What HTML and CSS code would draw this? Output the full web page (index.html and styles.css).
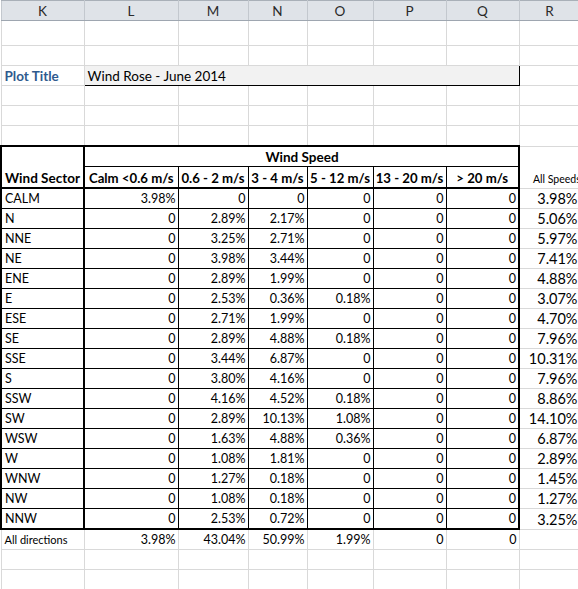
FILE: index.html
```html
<!DOCTYPE html>
<html>
<head>
<meta charset="utf-8">
<link rel="stylesheet" href="styles.css">
</head>
<body>
<table class="sheet">
  <colgroup>
    <col class="c-k"><col class="c-l"><col class="c-m"><col class="c-n"><col class="c-o"><col class="c-p"><col class="c-q"><col class="c-r">
  </colgroup>
  <thead>
    <tr class="colhead">
      <th>K</th><th>L</th><th>M</th><th>N</th><th>O</th><th>P</th><th>Q</th><th>R</th>
    </tr>
  </thead>
  <tbody>
    <tr class="r-first"><td></td><td></td><td></td><td></td><td></td><td></td><td></td><td></td></tr>
    <tr><td></td><td></td><td></td><td></td><td></td><td></td><td></td><td></td></tr>
    <tr>
      <td class="plot-label">Plot Title</td>
      <td class="plot-box" colspan="6">Wind Rose - June 2014</td>
      <td></td>
    </tr>
    <tr><td></td><td></td><td></td><td></td><td></td><td></td><td></td><td></td></tr>
    <tr><td></td><td></td><td></td><td></td><td></td><td></td><td></td><td></td></tr>
    <tr><td></td><td></td><td></td><td></td><td></td><td></td><td></td><td></td></tr>

    <tr class="hrow1">
      <td class="t sector-head" rowspan="2">Wind Sector</td>
      <td class="t speed-head" colspan="6">Wind Speed</td>
      <td class="r-blank"></td>
    </tr>
    <tr class="hrow2">
      <td class="t bin">Calm &lt;0.6 m/s</td>
      <td class="t bin">0.6 - 2 m/s</td>
      <td class="t bin">3 - 4 m/s</td>
      <td class="t bin">5 - 12 m/s</td>
      <td class="t bin">13 - 20 m/s</td>
      <td class="t bin last">&gt; 20 m/s</td>
      <td class="all-speeds">All Speeds</td>
    </tr>

    <tr class="first-data"><td class="t dir">CALM</td><td class="t n">3.98%</td><td class="t n">0</td><td class="t n">0</td><td class="t n">0</td><td class="t n">0</td><td class="t n last">0</td><td class="tot">3.98%</td></tr>
    <tr><td class="t dir">N</td><td class="t n">0</td><td class="t n">2.89%</td><td class="t n">2.17%</td><td class="t n">0</td><td class="t n">0</td><td class="t n last">0</td><td class="tot">5.06%</td></tr>
    <tr><td class="t dir">NNE</td><td class="t n">0</td><td class="t n">3.25%</td><td class="t n">2.71%</td><td class="t n">0</td><td class="t n">0</td><td class="t n last">0</td><td class="tot">5.97%</td></tr>
    <tr><td class="t dir">NE</td><td class="t n">0</td><td class="t n">3.98%</td><td class="t n">3.44%</td><td class="t n">0</td><td class="t n">0</td><td class="t n last">0</td><td class="tot">7.41%</td></tr>
    <tr><td class="t dir">ENE</td><td class="t n">0</td><td class="t n">2.89%</td><td class="t n">1.99%</td><td class="t n">0</td><td class="t n">0</td><td class="t n last">0</td><td class="tot">4.88%</td></tr>
    <tr><td class="t dir">E</td><td class="t n">0</td><td class="t n">2.53%</td><td class="t n">0.36%</td><td class="t n">0.18%</td><td class="t n">0</td><td class="t n last">0</td><td class="tot">3.07%</td></tr>
    <tr><td class="t dir">ESE</td><td class="t n">0</td><td class="t n">2.71%</td><td class="t n">1.99%</td><td class="t n">0</td><td class="t n">0</td><td class="t n last">0</td><td class="tot">4.70%</td></tr>
    <tr><td class="t dir">SE</td><td class="t n">0</td><td class="t n">2.89%</td><td class="t n">4.88%</td><td class="t n">0.18%</td><td class="t n">0</td><td class="t n last">0</td><td class="tot">7.96%</td></tr>
    <tr><td class="t dir">SSE</td><td class="t n">0</td><td class="t n">3.44%</td><td class="t n">6.87%</td><td class="t n">0</td><td class="t n">0</td><td class="t n last">0</td><td class="tot">10.31%</td></tr>
    <tr><td class="t dir">S</td><td class="t n">0</td><td class="t n">3.80%</td><td class="t n">4.16%</td><td class="t n">0</td><td class="t n">0</td><td class="t n last">0</td><td class="tot">7.96%</td></tr>
    <tr><td class="t dir">SSW</td><td class="t n">0</td><td class="t n">4.16%</td><td class="t n">4.52%</td><td class="t n">0.18%</td><td class="t n">0</td><td class="t n last">0</td><td class="tot">8.86%</td></tr>
    <tr><td class="t dir">SW</td><td class="t n">0</td><td class="t n">2.89%</td><td class="t n">10.13%</td><td class="t n">1.08%</td><td class="t n">0</td><td class="t n last">0</td><td class="tot">14.10%</td></tr>
    <tr><td class="t dir">WSW</td><td class="t n">0</td><td class="t n">1.63%</td><td class="t n">4.88%</td><td class="t n">0.36%</td><td class="t n">0</td><td class="t n last">0</td><td class="tot">6.87%</td></tr>
    <tr><td class="t dir">W</td><td class="t n">0</td><td class="t n">1.08%</td><td class="t n">1.81%</td><td class="t n">0</td><td class="t n">0</td><td class="t n last">0</td><td class="tot">2.89%</td></tr>
    <tr><td class="t dir">WNW</td><td class="t n">0</td><td class="t n">1.27%</td><td class="t n">0.18%</td><td class="t n">0</td><td class="t n">0</td><td class="t n last">0</td><td class="tot">1.45%</td></tr>
    <tr><td class="t dir">NW</td><td class="t n">0</td><td class="t n">1.08%</td><td class="t n">0.18%</td><td class="t n">0</td><td class="t n">0</td><td class="t n last">0</td><td class="tot">1.27%</td></tr>
    <tr class="last-data"><td class="t dir">NNW</td><td class="t n">0</td><td class="t n">2.53%</td><td class="t n">0.72%</td><td class="t n">0</td><td class="t n">0</td><td class="t n last">0</td><td class="tot">3.25%</td></tr>

    <tr class="totals">
      <td class="all-dir">All directions</td>
      <td class="n">3.98%</td><td class="n">43.04%</td><td class="n">50.99%</td><td class="n">1.99%</td><td class="n">0</td><td class="n">0</td><td></td>
    </tr>
    <tr><td></td><td></td><td></td><td></td><td></td><td></td><td></td><td></td></tr>
    <tr><td></td><td></td><td></td><td></td><td></td><td></td><td></td><td></td></tr>
  </tbody>
</table>
</body>
</html>
```

FILE: styles.css
```css
html, body {
  margin: 0;
  padding: 0;
  background: #ffffff;
  overflow: hidden;
}

body {
  width: 578px;
  height: 589px;
}

.sheet {
  border-collapse: collapse;
  table-layout: fixed;
  width: 579px;
  font-family: Lato, "Liberation Sans", sans-serif;
  font-size: 12.5px;
  color: #000;
}

.c-k { width: 83px; }
.c-l { width: 94px; }
.c-m { width: 70px; }
.c-n { width: 59px; }
.c-o { width: 66px; }
.c-p { width: 73px; }
.c-q { width: 73px; }
.c-r { width: 61px; }

.sheet td {
  border: 1px solid #d9d9d9;
  height: 18px;
  padding: 0 2px 1px 3px;
  vertical-align: bottom;
  line-height: 16px;
  white-space: nowrap;
  overflow: hidden;
}

/* column header strip */
.colhead th {
  height: 19px;
  padding: 0;
  background: #dfe3e8;
  border-top: 1px solid #a9b0b8;
  border-bottom: 1px solid #9ea6b0;
  border-left: 1px solid #c3c8ce;
  border-right: 1px solid #c3c8ce;
  font-weight: normal;
  font-size: 13.5px;
  color: #2a2a2a;
  text-align: center;
  vertical-align: middle;
  line-height: 18px;
}

.sheet .r-first td { height: 23px; }

/* plot title */
.plot-label {
  font-weight: bold;
  font-size: 13.5px;
  color: #2f5a8e;
}

.sheet .plot-box {
  background: #f2f2f2;
  border: 1px solid #000;
  font-size: 13.5px;
}

/* data table */
.sheet .t {
  border: 1px solid #000;
}

.sheet .hrow1 .t {
  border-top: 2px solid #000;
}

.sheet .hrow2 td { height: 19px; }

.sheet .sector-head {
  border-left: 2px solid #000;
  border-right: 2px solid #000;
  border-bottom: 2px solid #000;
  font-weight: bold;
  font-size: 13.5px;
  padding-left: 3px;
  padding-right: 0;
}

.sheet .speed-head {
  border-right: 2px solid #000;
  font-weight: bold;
  font-size: 13.5px;
  text-align: center;
}

.sheet .bin {
  border-bottom: 2px solid #000;
  font-weight: bold;
  font-size: 13.2px;
  text-align: center;
  padding: 0 1px 1px 1px;
}

.sheet .t.last {
  border-right: 2px solid #000;
}

.sheet .dir {
  border-left: 2px solid #000;
  border-right: 2px solid #000;
}

.sheet .last-data .t {
  border-bottom: 2px solid #000;
}

.n {
  text-align: right;
}

.sheet .r-blank {
  border-bottom-color: #fff;
}

.sheet .all-speeds {
  font-size: 10.5px;
  text-align: left;
  padding-left: 13px;
  padding-right: 0;
}

.tot {
  font-size: 14.5px;
  text-align: right;
}

.all-dir {
  font-size: 11px;
}
```
